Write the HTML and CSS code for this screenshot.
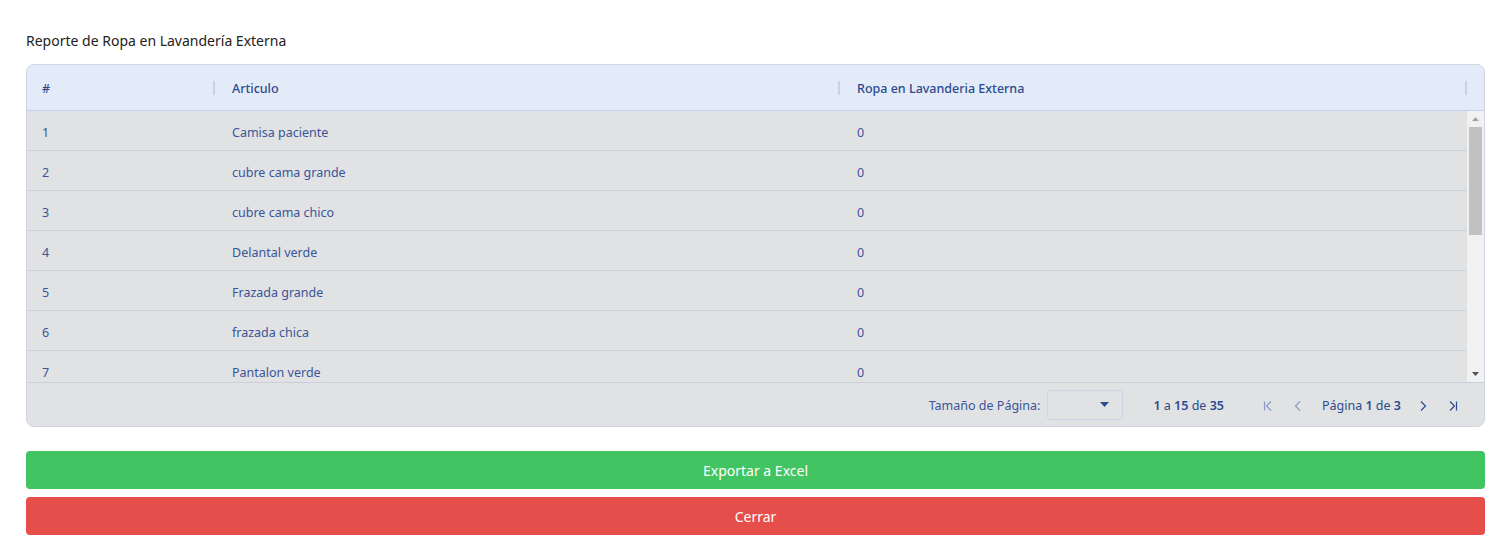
FILE: index.html
```html
<!DOCTYPE html>
<html lang="es">
<head>
<meta charset="utf-8">
<title>Reporte de Ropa en Lavandería Externa</title>
<link rel="stylesheet" href="styles.css">
</head>
<body>
<div class="page">
  <h1 class="title">Reporte de Ropa en Lavandería Externa</h1>
  <div class="grid">
    <div class="grid-header">
      <div class="hcell c1"><span>#</span><i class="handle"></i></div>
      <div class="hcell c2"><span>Articulo</span><i class="handle"></i></div>
      <div class="hcell c3"><span>Ropa en Lavanderia Externa</span><i class="handle"></i></div>
      <div class="hspacer"></div>
    </div>
    <div class="grid-body">
      <div class="rows">
        <div class="row"><div class="cell c1">1</div><div class="cell c2">Camisa paciente</div><div class="cell c3">0</div></div>
        <div class="row"><div class="cell c1">2</div><div class="cell c2">cubre cama grande</div><div class="cell c3">0</div></div>
        <div class="row"><div class="cell c1">3</div><div class="cell c2">cubre cama chico</div><div class="cell c3">0</div></div>
        <div class="row"><div class="cell c1">4</div><div class="cell c2">Delantal verde</div><div class="cell c3">0</div></div>
        <div class="row"><div class="cell c1">5</div><div class="cell c2">Frazada grande</div><div class="cell c3">0</div></div>
        <div class="row"><div class="cell c1">6</div><div class="cell c2">frazada chica</div><div class="cell c3">0</div></div>
        <div class="row"><div class="cell c1">7</div><div class="cell c2">Pantalon verde</div><div class="cell c3">0</div></div>
      </div>
      <div class="scrollbar">
        <div class="sb-arrow"><svg width="7" height="4" viewBox="0 0 7 4"><path d="M3.5 0L7 4H0z" fill="#a3a3a3"/></svg></div>
        <div class="sb-thumb"></div>
        <div class="sb-track"></div>
        <div class="sb-arrow"><svg width="7" height="4" viewBox="0 0 7 4"><path d="M0 0H7L3.5 4z" fill="#505050"/></svg></div>
      </div>
    </div>
    <div class="grid-footer">
      <span class="lbl">Tamaño de Página:</span>
      <div class="select"><svg width="9" height="5" viewBox="0 0 9 5"><path d="M0 0H9L4.5 5z" fill="#2d4b8f"/></svg></div>
      <span class="summary"><b>1</b> a <b>15</b> de <b>35</b></span>
      <div class="pager">
        <svg class="pbtn dis" width="12" height="12" viewBox="0 0 12 12"><path d="M2.5 1.5v9M9 1.5L4.5 6 9 10.5" fill="none" stroke="currentColor" stroke-width="1.2"/></svg>
        <svg class="pbtn dis" width="12" height="12" viewBox="0 0 12 12"><path d="M8 1.5L3.5 6 8 10.5" fill="none" stroke="currentColor" stroke-width="1.2"/></svg>
        <span class="pinfo">Página <b>1</b> de <b>3</b></span>
        <svg class="pbtn" width="12" height="12" viewBox="0 0 12 12"><path d="M4 1.5L8.5 6 4 10.5" fill="none" stroke="currentColor" stroke-width="1.2"/></svg>
        <svg class="pbtn" width="12" height="12" viewBox="0 0 12 12"><path d="M3 1.5L7.5 6 3 10.5M9.5 1.5v9" fill="none" stroke="currentColor" stroke-width="1.2"/></svg>
      </div>
    </div>
  </div>
  <div class="actions">
    <button class="btn btn-green">Exportar a Excel</button>
    <button class="btn btn-red">Cerrar</button>
  </div>
</div>
</body>
</html>
```
FILE: styles.css
```css
* { box-sizing: border-box; }
html, body { margin: 0; padding: 0; background: #fff; }
body { font-family: "Noto Sans", "Open Sans", "Liberation Sans", sans-serif; }
.page { padding: 31px 26px 0 26px; }
.title {
  margin: 0 0 13px 0;
  font-size: 14px;
  line-height: 20px;
  font-weight: 400;
  color: #222;
}
.grid {
  border: 1px solid #cfd5e3;
  border-radius: 8px;
  overflow: hidden;
  background: #e1e2e4;
}
.grid-header {
  display: flex;
  height: 46px;
  padding-top: 2px;
  background: #e3ebf8;
  border-bottom: 1px solid #c3d2ee;
}
.hcell {
  display: flex;
  align-items: center;
  justify-content: space-between;
  padding-left: 15px;
  font-size: 12.5px;
  font-weight: 500;
  color: #2b4a8d;
}
.handle {
  display: block;
  width: 2px;
  height: 14px;
  margin-top: -2px;
  background: #c6d3ec;
}
.c1 { width: 188px; flex: none; }
.c2 { width: 625px; flex: none; }
.c3 { width: 627px; flex: none; }
.hcell.c2, .hcell.c3, .cell.c2, .cell.c3 { padding-left: 17px; }
.hspacer { flex: 1; }
.grid-body {
  display: flex;
  height: 271px;
}
.rows { flex: 1; overflow: hidden; }
.row {
  display: flex;
  height: 40px;
  padding-top: 3px;
  border-bottom: 1px solid #cbcfdc;
}
.cell {
  display: flex;
  align-items: center;
  padding-left: 15px;
  font-size: 12.5px;
  color: #3a5598;
}
.scrollbar {
  width: 17px;
  flex: none;
  display: flex;
  flex-direction: column;
  background: #f1f1f1;
}
.sb-arrow {
  height: 16px;
  display: flex;
  align-items: center;
  justify-content: center;
}
.sb-thumb {
  height: 108px;
  margin: 0 2px;
  background: #c1c1c1;
}
.sb-track { flex: 1; }
.grid-footer {
  display: flex;
  align-items: center;
  justify-content: flex-end;
  height: 44px;
  padding-top: 2px;
  border-top: 1px solid #cbcfdc;
  padding-right: 16px;
  font-size: 12.5px;
  color: #3a5598;
}
.lbl { margin-right: 7px; }
.select {
  width: 76px;
  height: 30px;
  margin-top: -2px;
  border: 1px solid #cdd3e2;
  border-radius: 4px;
  display: flex;
  align-items: center;
  justify-content: flex-end;
  padding-right: 13px;
  margin-right: 30px;
}
.summary { color: #2d4b8f; }
.summary b, .pinfo b { font-weight: 600; }
.pager { display: flex; align-items: center; margin-left: 29px; }
.pbtn { color: #2d4b8f; margin: 0 9px; }
.pbtn.dis { color: #8a9cc6; }
.pinfo { margin: 0 7px 0 9px; color: #2d4b8f; }
.actions {
  display: flex;
  flex-direction: column;
  gap: 8px;
  margin-top: 24px;
}
.btn {
  height: 38px;
  border: none;
  border-radius: 4px;
  font-family: inherit;
  font-size: 14px;
  color: #fff;
  cursor: pointer;
}
.btn-green { background: #42c462; }
.btn-red { background: #e54e4a; }
```
